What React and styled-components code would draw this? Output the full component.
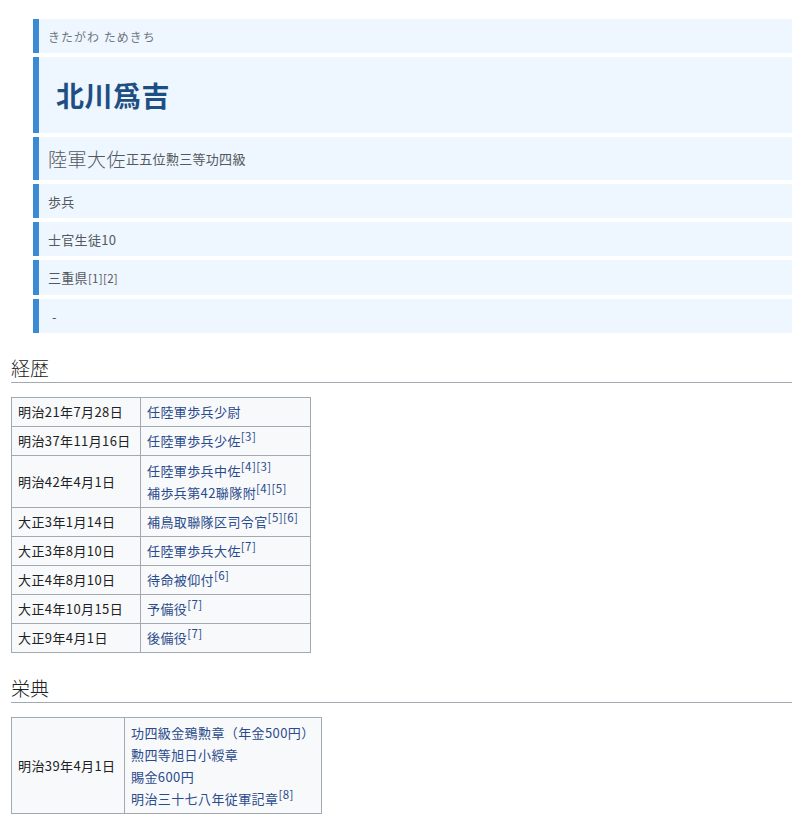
import React from "react";
import styled, { createGlobalStyle } from "styled-components";

const G = createGlobalStyle`
  body { margin: 0; font-family: "Noto Sans CJK JP", "Noto Sans", sans-serif; background:#fff; color:#202122; }
`;
const Page = styled.div`padding: 19px 0 0 11px; width: 781px;`;
const Infobox = styled.div`margin-left: 22px; display: flex; flex-direction: column; gap: 4px;`;
const Item = styled.div`
  background: #eef6ff; border-left: 6px solid #3a8ad4;
  min-height: ${p => p.h}px; box-sizing: border-box;
  display: flex; align-items: center; padding-left: ${p => p.pl || 9}px;
  color: #54595d; font-size: 13px; letter-spacing: 0.3px;
`;
const Kana = styled.span`font-size: 12px; color: #72777d; letter-spacing: 1px;`;
const Title = styled.h1`margin: 0; font-size: 28px; font-weight: 700; color: #1d4f82; letter-spacing: 0.5px;`;
const Rank = styled.span`font-size: 19px; font-weight: 300; color: #54595d; letter-spacing: 0.5px;`;
const Sup = styled.sup`font-size: 11.5px; line-height: 0;`;
const H2 = styled.h2`
  margin: 22px 0 14px; font-size: 19px; font-weight: 300; color: #202122;
  border-bottom: 1px solid #a2a9b1; padding-bottom: 1px; line-height: 26px;
`;
const Table = styled.table`
  border-collapse: collapse; font-size: 13px; background: #f8f9fa; letter-spacing: 0.4px;
  td { border: 1px solid #a2a9b1; padding: 0 6px; color: #202122; line-height: 22px; }
  td:first-child { width: ${p => p.c1}px; }
`;
const Row = styled.tr`height: ${p => p.h || 29}px;`;
const Lnk = styled.div`color: #2a4b8d;`;

const career = [
  ["明治21年7月28日", [["任陸軍歩兵少尉", ""]]],
  ["明治37年11月16日", [["任陸軍歩兵少佐", "[3]"]]],
  ["明治42年4月1日", [["任陸軍歩兵中佐", "[4][3]"], ["補歩兵第42聯隊附", "[4][5]"]], 52],
  ["大正3年1月14日", [["補鳥取聯隊区司令官", "[5][6]"]]],
  ["大正3年8月10日", [["任陸軍歩兵大佐", "[7]"]]],
  ["大正4年8月10日", [["待命被仰付", "[6]"]]],
  ["大正4年10月15日", [["予備役", "[7]"]]],
  ["大正9年4月1日", [["後備役", "[7]"]]],
];

export default function App() {
  return (
    <Page>
      <G />
      <Infobox>
        <Item h={34}><Kana>きたがわ ためきち</Kana></Item>
        <Item h={76} pl={17}><Title>北川爲吉</Title></Item>
        <Item h={43}><Rank>陸軍大佐</Rank>正五位勲三等功四級</Item>
        <Item h={34}>歩兵</Item>
        <Item h={34}>士官生徒10</Item>
        <Item h={35}>三重県<Sup>[1][2]</Sup></Item>
        <Item h={34} pl={13}>-</Item>
      </Infobox>
      <H2>経歴</H2>
      <Table c1={116}>
        <tbody>
          {career.map(([d, items, h]) => (
            <Row key={d} h={h}>
              <td>{d}</td>
              <td style={{ width: 157 }}>
                {items.map(([t, s]) => <Lnk key={t}>{t}{s && <Sup>{s}</Sup>}</Lnk>)}
              </td>
            </Row>
          ))}
        </tbody>
      </Table>
      <H2>栄典</H2>
      <Table c1={100}>
        <tbody>
          <Row h={96}>
            <td>明治39年4月1日</td>
            <td>
              <Lnk>功四級金鵄勲章（年金500円）</Lnk>
              <Lnk>勲四等旭日小綬章</Lnk>
              <Lnk>賜金600円</Lnk>
              <Lnk>明治三十七八年従軍記章<Sup>[8]</Sup></Lnk>
            </td>
          </Row>
        </tbody>
      </Table>
    </Page>
  );
}
